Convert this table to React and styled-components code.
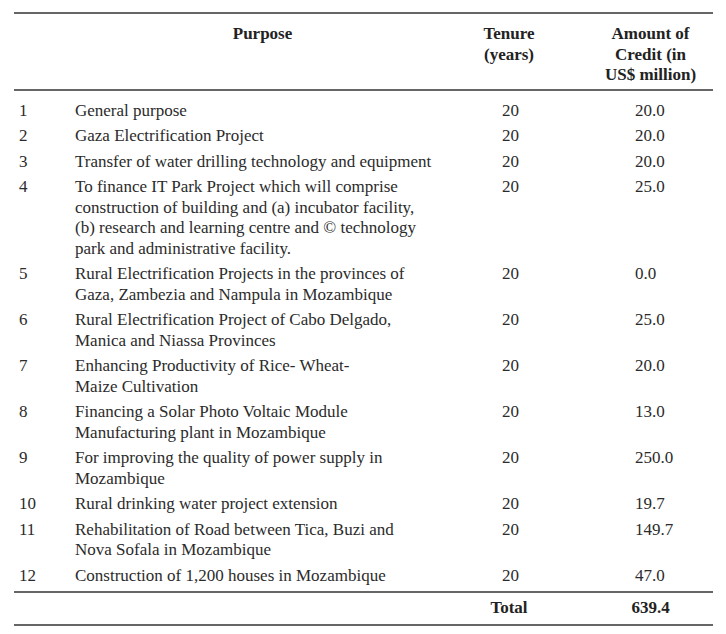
import React from "react";
import styled, { createGlobalStyle } from "styled-components";

const GlobalStyle = createGlobalStyle`
  html, body {
    margin: 0;
    padding: 0;
    background: #ffffff;
  }
  body {
    font-family: "Liberation Serif", "DejaVu Serif", serif;
    color: #2b2b2b;
  }
`;

const Page = styled.div`
  width: 726px;
  height: 634px;
  padding: 12px 13px 0 14px;
  box-sizing: border-box;
  background: #fff;
`;

const Table = styled.div`
  display: grid;
  grid-template-columns: 61px 375px 118px 145px;
  width: 699px;
  border-top: 2px solid #666;
  border-bottom: 2px solid #666;
`;

const HeadCell = styled.div`
  font-weight: 700;
  font-size: 17px;
  line-height: 20.5px;
  text-align: center;
  padding: 10px 0 3px ${(p) => p.$indent || 0}px;
  border-bottom: 2px solid #666;
  color: #222;
`;

const Cell = styled.div`
  font-size: 17px;
  line-height: 20.5px;
  white-space: nowrap;
  padding: ${(p) => (p.$first ? "10px" : "2.5px")} 0
    ${(p) => (p.$last ? "5px" : "2.5px")} ${(p) => p.$indent || 0}px;
`;

const TotalCell = styled.div`
  font-weight: 700;
  font-size: 17px;
  line-height: 20.5px;
  text-align: center;
  padding: 5px 0 5px ${(p) => p.$indent || 0}px;
  border-top: 2px solid #666;
  color: #222;
`;

const rows = [
  ["General purpose"],
  ["Gaza Electrification Project"],
  ["Transfer of water drilling technology and equipment"],
  [
    "To finance IT Park Project which will comprise",
    "construction of building and (a) incubator facility,",
    "(b) research and learning centre and \u00a9 technology",
    "park and administrative facility.",
  ],
  [
    "Rural Electrification Projects in the provinces of",
    "Gaza, Zambezia and Nampula in Mozambique",
  ],
  [
    "Rural Electrification Project of Cabo Delgado,",
    "Manica and Niassa Provinces",
  ],
  ["Enhancing Productivity of Rice- Wheat-", "Maize Cultivation"],
  [
    "Financing a Solar Photo Voltaic Module",
    "Manufacturing plant in Mozambique",
  ],
  ["For improving the quality of power supply in", "Mozambique"],
  ["Rural drinking water project extension"],
  ["Rehabilitation of Road between Tica, Buzi and", "Nova Sofala in Mozambique"],
  ["Construction of 1,200 houses in Mozambique"],
];

const amounts = [
  "20.0",
  "20.0",
  "20.0",
  "25.0",
  "0.0",
  "25.0",
  "20.0",
  "13.0",
  "250.0",
  "19.7",
  "149.7",
  "47.0",
];

export default function App() {
  return (
    <Page>
      <GlobalStyle />
      <Table>
        <HeadCell />
        <HeadCell>Purpose</HeadCell>
        <HeadCell>
          Tenure
          <br />
          (years)
        </HeadCell>
        <HeadCell $indent={20}>
          Amount of
          <br />
          Credit (in
          <br />
          US$ million)
        </HeadCell>

        {rows.map((lines, i) => {
          const first = i === 0;
          const last = i === rows.length - 1;
          return (
            <React.Fragment key={i}>
              <Cell $first={first} $last={last} $indent={5}>
                {i + 1}
              </Cell>
              <Cell $first={first} $last={last}>
                {lines.map((l, j) => (
                  <div key={j}>{l}</div>
                ))}
              </Cell>
              <Cell $first={first} $last={last} $indent={52}>
                20
              </Cell>
              <Cell $first={first} $last={last} $indent={67}>
                {amounts[i]}
              </Cell>
            </React.Fragment>
          );
        })}

        <TotalCell />
        <TotalCell />
        <TotalCell>Total</TotalCell>
        <TotalCell $indent={20}>639.4</TotalCell>
      </Table>
    </Page>
  );
}
